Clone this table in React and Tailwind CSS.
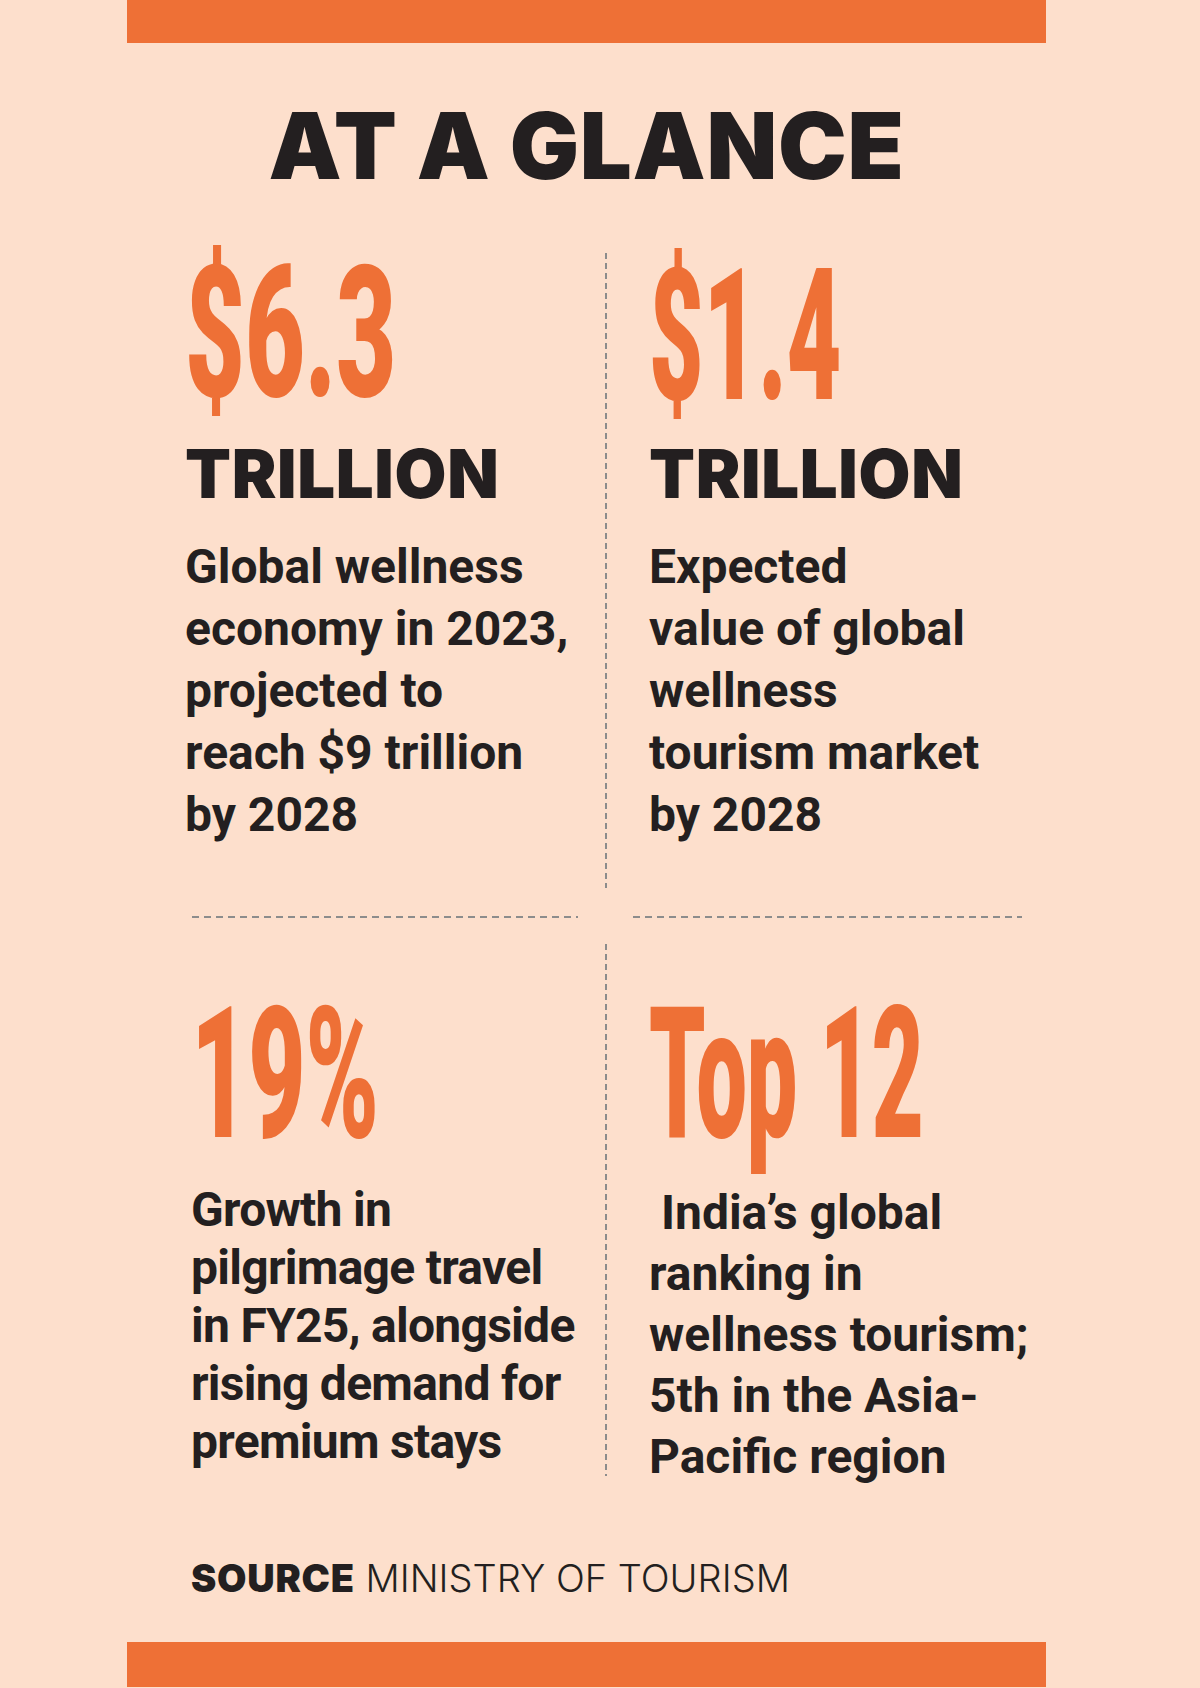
import React from "react";

const num = "font-['Roboto',sans-serif] font-black text-[183px] leading-[150px] text-[#ee7036] whitespace-nowrap origin-left";
const big = "font-['Inter',sans-serif] font-black text-[67px] leading-none text-[#231f20] tracking-[0.01em]";
const body = "font-['Roboto',sans-serif] font-bold text-[48px] text-[#231f20] whitespace-nowrap";

const vDash = "w-[2px] shrink-0 bg-[repeating-linear-gradient(to_bottom,#8c8c8c_0px,#8c8c8c_6px,transparent_6px,transparent_10px)]";
const hDash = "h-[2px] bg-[repeating-linear-gradient(to_right,#8c8c8c_0px,#8c8c8c_7px,transparent_7px,transparent_12px)]";

const Lines = ({ lines, className }) => (
  <div className={className}>
    {lines.map((l) => (
      <div key={l}>{l}</div>
    ))}
  </div>
);

const App = () => {
  return (
    <div className="w-[1200px] min-h-[1688px] bg-[#fddfcc] flex flex-col overflow-hidden">
      <div className="ml-[127px] w-[919px] h-[43px] bg-[#ee7036]" />

      <h1 className="mt-[57px] ml-[127px] w-[919px] text-center font-['Inter',sans-serif] font-black text-[92px] leading-none text-[#231f20] tracking-[0.008em]">
        AT A GLANCE
      </h1>

      {/* top row */}
      <div className="mt-[61px] pl-[185px] flex h-[635px]">
        <div className="w-[420px] shrink-0">
          <div className={`${num} mt-[6px] scale-x-[0.565]`}>$6.3</div>
          <div className={`${big} mt-[31px]`}>TRILLION</div>
          <Lines
            className={`${body} mt-[29px] leading-[62px]`}
            lines={["Global wellness", "economy in 2023,", "projected to", "reach $9 trillion", "by 2028"]}
          />
        </div>
        <div className={vDash} />
        <div className="pl-[42px] shrink-0">
          <div className={`${num} mt-[9px] scale-x-[0.515]`}>$1.4</div>
          <div className={`${big} mt-[28px]`}>TRILLION</div>
          <Lines
            className={`${body} mt-[29px] leading-[62px]`}
            lines={["Expected", "value of global", "wellness", "tourism market", "by 2028"]}
          />
        </div>
      </div>

      {/* separators */}
      <div className="mt-[28px] pl-[192px] flex">
        <div className={`${hDash} w-[386px]`} />
        <div className={`${hDash} w-[389px] ml-[55px]`} />
      </div>

      {/* bottom row */}
      <div className="mt-[26px] pl-[185px] flex h-[532px]">
        <div className="w-[420px] shrink-0 pl-[6px]">
          <div className={`${num} mt-[56px] scale-x-[0.54]`}>19%</div>
          <Lines
            className={`${body} mt-[31px] leading-[58px] tracking-[-0.015em]`}
            lines={["Growth in", "pilgrimage travel", "in FY25, alongside", "rising demand for", "premium stays"]}
          />
        </div>
        <div className={vDash} />
        <div className="pl-[42px] shrink-0">
          <div className={`${num} mt-[56px] scale-x-[0.49]`}>Top 12</div>
          <Lines
            className={`${body} mt-[32px] leading-[61px]`}
            lines={["\u00a0India\u2019s global", "ranking in", "wellness tourism;", "5th in the Asia-", "Pacific region"]}
          />
        </div>
      </div>

      <p className="mt-[83px] pl-[191px] font-['Inter',sans-serif] text-[38px] leading-none text-[#231f20] whitespace-nowrap">
        <span className="font-black tracking-[0.02em]">SOURCE</span> <span className="font-light">MINISTRY OF TOURISM</span>
      </p>

      <div className="mt-[45px] ml-[127px] w-[919px] h-[45px] bg-[#ee7036]" />
    </div>
  );
};

export default App;
